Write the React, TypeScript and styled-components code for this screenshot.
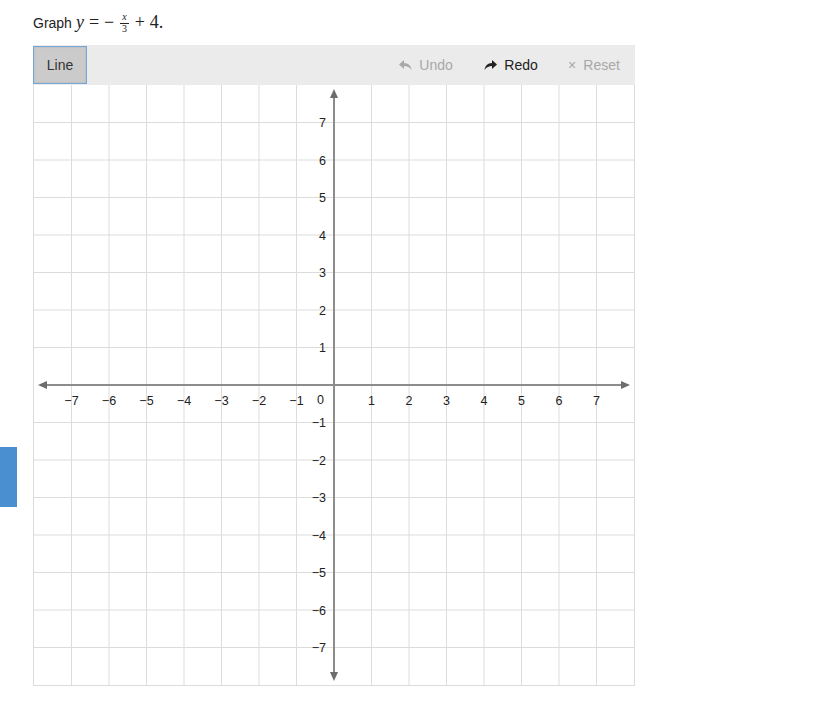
import React from "react";
import styled, { createGlobalStyle } from "styled-components";

const Global = createGlobalStyle`
  html, body { margin: 0; padding: 0; background: #fff; }
  body { font-family: "Liberation Sans", Arial, sans-serif; color: #333; }
`;

const Page = styled.div`
  position: relative;
  width: 828px;
  height: 712px;
  padding: 0 0 0 33px;
  box-sizing: border-box;
`;

const Prompt = styled.div`
  font-size: 14px;
  color: #222;
  height: 45px;
  display: flex;
  align-items: center;
  gap: 4px;
`;

const MathWrap = styled.span`
  font-family: "Liberation Serif", "DejaVu Serif", serif;
  font-size: 18px;
  color: #222;
  display: inline-flex;
  align-items: center;
`;

const MI = styled.i`
  font-style: italic;
  font-family: "Liberation Serif", "DejaVu Serif", serif;
`;

const Op = styled.span<{ $l: number; $r: number }>`
  display: inline-block;
  margin-left: ${(p) => p.$l}px;
  margin-right: ${(p) => p.$r}px;
`;

const Frac = styled.span`
  display: inline-flex;
  flex-direction: column;
  align-items: center;
  font-size: 10px;
  line-height: 10px;
  margin: 0 6px 0 6px;
`;

const Num = styled.i`
  font-style: italic;
  border-bottom: 1px solid #222;
  padding: 0 2px 1px;
`;

const Widget = styled.div`
  width: 602px;
`;

const Toolbar = styled.div`
  height: 40px;
  background: #ebebeb;
  display: flex;
  align-items: center;
  box-sizing: border-box;
`;

const ToolButton = styled.button`
  height: 38px;
  width: 54px;
  margin: 0;
  background: #cbcbcb;
  border: 1px solid #74a7d8;
  font-family: "Liberation Sans", Arial, sans-serif;
  font-size: 14px;
  color: #333;
  padding: 0;
  box-shadow: inset 0 0 2px rgba(0,0,0,0.15);
`;

const Spacer = styled.div`
  flex: 1;
`;

const ActionButton = styled.button<{ $disabled?: boolean; $w: number }>`
  height: 40px;
  width: ${(p) => p.$w}px;
  background: transparent;
  border: none;
  font-family: "Liberation Sans", Arial, sans-serif;
  font-size: 14px;
  color: ${(p) => (p.$disabled ? "#a8a8a8" : "#222")};
  display: flex;
  align-items: center;
  justify-content: center;
  gap: 7px;
  padding: 0;
`;

const Board = styled.div`
  width: 602px;
  height: 601px;
  border: 1px solid #dcdcdc;
  border-top: none;
  box-sizing: border-box;
`;

const SideTab = styled.div`
  position: absolute;
  left: 0;
  top: 447px;
  width: 17px;
  height: 60px;
  background: #4a8fd0;
`;

const UndoIcon = () => (
  <svg width="13" height="11" viewBox="0 0 13 11">
    <path d="M5 0 L0 4.5 L5 9 L5 6 C8 6 10.5 7 12.5 10 C12 6 9.5 3.2 5 3 Z" fill="currentColor" />
  </svg>
);

const RedoIcon = () => (
  <svg width="13" height="11" viewBox="0 0 13 11">
    <path d="M8 0 L13 4.5 L8 9 L8 6 C5 6 2.5 7 0.5 10 C1 6 3.5 3.2 8 3 Z" fill="currentColor" />
  </svg>
);

const S = 37.5;
const OX = 300;
const OY = 300;

const Graph = () => {
  const ticks: number[] = [];
  for (let i = -7; i <= 7; i++) ticks.push(i);
  const fmt = (n: number) => (n < 0 ? "\u2212" + Math.abs(n) : String(n));
  return (
    <svg width="600" height="600" viewBox="0 0 600 600" style={{ display: "block" }}>
      {ticks.map((i) =>
        i !== 0 ? (
          <g key={"g" + i}>
            <line x1={OX + i * S} y1={0} x2={OX + i * S} y2={600} stroke="#dcdcdc" strokeWidth={1} />
            <line x1={0} y1={OY + i * S} x2={600} y2={OY + i * S} stroke="#dcdcdc" strokeWidth={1} />
          </g>
        ) : null
      )}
      <line x1={8} y1={OY} x2={592} y2={OY} stroke="#8c8c8c" strokeWidth={2} />
      <line x1={OX} y1={8} x2={OX} y2={592} stroke="#8c8c8c" strokeWidth={2} />
      <polygon points="4,300 13,296 13,304" fill="#6d6d6d" />
      <polygon points="596,300 587,296 587,304" fill="#6d6d6d" />
      <polygon points="300,4 296,13 304,13" fill="#6d6d6d" />
      <polygon points="300,596 296,587 304,587" fill="#6d6d6d" />
      {ticks.map((i) =>
        i === 0 ? null : (
          <g key={"t" + i}>
            <text
              x={OX + i * S}
              y={OY + 20}
              textAnchor="middle"
              fontFamily="Liberation Sans, Arial, sans-serif"
              fontSize="12.5"
              fill="#222"
            >
              {fmt(i)}
            </text>
            <text
              x={OX - 8}
              y={OY - i * S + 4.5}
              textAnchor="end"
              fontFamily="Liberation Sans, Arial, sans-serif"
              fontSize="12.5"
              fill="#222"
            >
              {fmt(i)}
            </text>
          </g>
        )
      )}
      <text x={OX - 10} y={OY + 19} textAnchor="end" fontFamily="Liberation Sans, Arial, sans-serif" fontSize="12.5" fill="#222">
        0
      </text>
    </svg>
  );
};

export default function App() {
  return (
    <>
      <Global />
      <Page>
        <Prompt>
          <span>Graph</span>
          <MathWrap>
            <MI>y</MI>
            <Op $l={5} $r={5}>=</Op>
            <span>−</span>
            <Frac>
              <Num>x</Num>
              <span>3</span>
            </Frac>
            <Op $l={0} $r={5}>+</Op>
            <span>4</span>
            <span>.</span>
          </MathWrap>
        </Prompt>
        <Widget>
          <Toolbar>
            <ToolButton>Line</ToolButton>
            <Spacer />
            <ActionButton $disabled $w={86}>
              <UndoIcon />
              Undo
            </ActionButton>
            <ActionButton $w={84}>
              <RedoIcon />
              Redo
            </ActionButton>
            <ActionButton $disabled $w={82}>
              <span>×</span>
              Reset
            </ActionButton>
          </Toolbar>
          <Board>
            <Graph />
          </Board>
        </Widget>
        <SideTab />
      </Page>
    </>
  );
}
